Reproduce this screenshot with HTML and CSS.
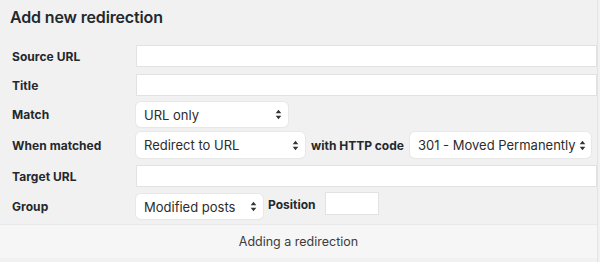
FILE: index.html
```html
<!DOCTYPE html>
<html>
<head>
<meta charset="utf-8">
<link rel="stylesheet" href="styles.css">
</head>
<body>
<div class="panel">
  <h2 class="heading">Add new redirection</h2>
  <div class="form">
    <div class="row r-source">
      <div class="label">Source URL</div>
      <div class="field"><div class="input full"></div></div>
    </div>
    <div class="row r-title">
      <div class="label">Title</div>
      <div class="field"><div class="input full"></div></div>
    </div>
    <div class="row r-match">
      <div class="label">Match</div>
      <div class="field">
        <div class="select w-match"><span>URL only</span><svg class="arr" viewBox="0 0 8 12" width="7" height="11"><path d="M4 0.5 L7.2 4.6 H0.8 Z M4 11.5 L0.8 7.4 H7.2 Z" fill="#333"/></svg></div>
      </div>
    </div>
    <div class="row r-when">
      <div class="label">When matched</div>
      <div class="field">
        <div class="select w-action"><span>Redirect to URL</span><svg class="arr" viewBox="0 0 8 12" width="7" height="11"><path d="M4 0.5 L7.2 4.6 H0.8 Z M4 11.5 L0.8 7.4 H7.2 Z" fill="#333"/></svg></div>
        <span class="inline-label">with HTTP code</span>
        <div class="select w-code"><span>301 - Moved Permanently</span><svg class="arr" viewBox="0 0 8 12" width="7" height="11"><path d="M4 0.5 L7.2 4.6 H0.8 Z M4 11.5 L0.8 7.4 H7.2 Z" fill="#333"/></svg></div>
      </div>
    </div>
    <div class="row r-target">
      <div class="label">Target URL</div>
      <div class="field"><div class="input full"></div></div>
    </div>
    <div class="row r-group">
      <div class="label">Group</div>
      <div class="field">
        <div class="select w-group"><span>Modified posts</span><svg class="arr" viewBox="0 0 8 12" width="7" height="11"><path d="M4 0.5 L7.2 4.6 H0.8 Z M4 11.5 L0.8 7.4 H7.2 Z" fill="#333"/></svg></div>
        <span class="inline-label pos-label">Position</span>
        <div class="input pos"></div>
      </div>
    </div>
  </div>
  <div class="footer">Adding a redirection</div>
</div>
</body>
</html>
```

FILE: styles.css
```css
html, body {
  margin: 0;
  padding: 0;
  background: #f1f1f1;
}
body {
  font-family: Inter, "Noto Sans", "Liberation Sans", sans-serif;
  color: #23282d;
  width: 600px;
  height: 262px;
  overflow: hidden;
}
.panel {
  width: 598px;
  border-right: 1px solid #e4e4e4;
  height: 262px;
  box-sizing: border-box;
}
.heading {
  margin: 0;
  padding: 7px 0 0 10px;
  height: 37px;
  box-sizing: border-box;
  font-size: 16px;
  font-weight: 600;
  letter-spacing: -0.15px;
  color: #23282d;
}
.form {
  display: flex;
  flex-direction: column;
}
.row {
  display: flex;
  align-items: center;
}
.label {
  width: 124px;
  flex: none;
  padding-left: 12px;
  font-size: 12px;
  font-weight: 700;
  letter-spacing: 0.05px;
  color: #23282d;
}
.field {
  flex: 1;
  display: flex;
  align-items: center;
}
.input {
  background: #fff;
  border: 1px solid #e2e2e2;
  box-sizing: border-box;
  height: 22px;
}
.full { width: 100%; }
.r-source { height: 22px; margin-top: 8px; }
.r-title { height: 22px; margin-top: 7px; }
.r-match { height: 25px; margin-top: 6px; }
.r-when { height: 26px; margin-top: 5px; }
.r-target { height: 22px; margin-top: 7px; }
.r-group { height: 27px; margin-top: 6px; }
.select {
  flex: none;
  white-space: nowrap;
  background: #fff;
  border-radius: 5px;
  box-shadow: 0 0 0 1px #e8e8e8, 0 1px 1px rgba(0,0,0,0.06);
  height: 25px;
  box-sizing: border-box;
  display: flex;
  align-items: center;
  justify-content: space-between;
  padding: 0 6px 0 8px;
  font-size: 13px;
  color: #2c2c2c;
}
.w-match { width: 152px; }
.w-action { width: 169px; height: 26px; }
.w-code { width: 181px; height: 26px; padding-right: 5px; }
.w-group { width: 127px; }
.inline-label {
  flex: none;
  white-space: nowrap;
  font-size: 12px;
  font-weight: 700;
  margin: 0 6px 0 6px;
  color: #23282d;
}
.pos-label { margin: 0 10px 0 5px; position: relative; top: -2px; }
.pos {
  width: 54px;
  height: 23px;
  position: relative;
  top: -3px;
}
.arr { flex: none; }
.footer {
  margin-top: 4px;
  height: 33px;
  background: #f6f6f6;
  border-top: 1px solid #e9e9e9;
  display: flex;
  align-items: center;
  justify-content: center;
  font-size: 12.5px;
  color: #3c3c3c;
}
```
